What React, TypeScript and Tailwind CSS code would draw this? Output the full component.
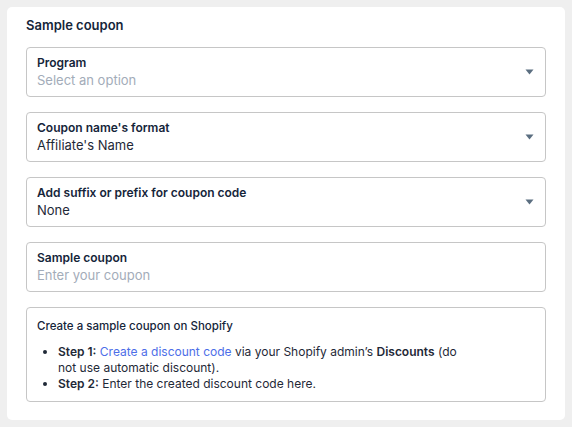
import React from 'react';

const font = { fontFamily: 'Inter, "Noto Sans", sans-serif' };

function Caret() {
  return (
    <svg width="9" height="6" viewBox="0 0 9 6" className="shrink-0">
      <path d="M0.5 0.5 H8.5 L4.5 5.5 Z" fill="#5b6e80" />
    </svg>
  );
}

function SelectField({ label, value, placeholder }: { label: string; value?: string; placeholder?: string }) {
  return (
    <div className="flex h-[50px] items-center rounded-[4px] border border-[#c6c6c6] pl-[10px] pr-[11px]">
      <div className="flex flex-1 flex-col">
        <span className="text-[12px] font-semibold leading-[16px] text-[#15253a]">{label}</span>
        {value ? (
          <span className="text-[13px] leading-[18px] text-[#1f2937]">{value}</span>
        ) : (
          <span className="text-[13px] leading-[18px] text-[#a3acb9]">{placeholder}</span>
        )}
      </div>
      <Caret />
    </div>
  );
}

function App() {
  return (
    <div className="min-h-screen bg-[#efefef] p-[7px]" style={font}>
      <div className="flex flex-col rounded-[5px] bg-white px-[19px] pt-[8px] pb-[18px]">
        <h2 className="mb-[12px] text-[13px] font-semibold leading-[20px] text-[#15253a]">Sample coupon</h2>
        <div className="flex flex-col gap-[15px]">
          <SelectField label="Program" placeholder="Select an option" />
          <SelectField label="Coupon name's format" value="Affiliate's Name" />
          <SelectField label="Add suffix or prefix for coupon code" value="None" />
          <div className="flex h-[50px] flex-col justify-center rounded-[4px] border border-[#c6c6c6] pl-[10px]">
            <span className="text-[12px] font-semibold leading-[16px] text-[#15253a]">Sample coupon</span>
            <span className="text-[13px] leading-[18px] text-[#a3acb9]">Enter your coupon</span>
          </div>
          <div className="rounded-[4px] border border-[#c6c6c6] pl-[10px] pr-[75px] pt-[10px] pb-[9px]">
            <p className="text-[11.5px] font-medium leading-[16px] text-[#15253a]">Create a sample coupon on Shopify</p>
            <ul className="mt-[10px] list-disc pl-[21px] text-[12px] leading-[16px] text-[#1f2937]">
              <li>
                <b className="font-semibold">Step 1:</b>{' '}
                <a className="text-[#4d6ee8]">Create a discount code</a> via your Shopify admin’s{' '}
                <b className="font-semibold">Discounts</b> (do not use automatic discount).
              </li>
              <li>
                <b className="font-semibold">Step 2:</b> Enter the created discount code here.
              </li>
            </ul>
          </div>
        </div>
      </div>
    </div>
  );
}

export default App;
